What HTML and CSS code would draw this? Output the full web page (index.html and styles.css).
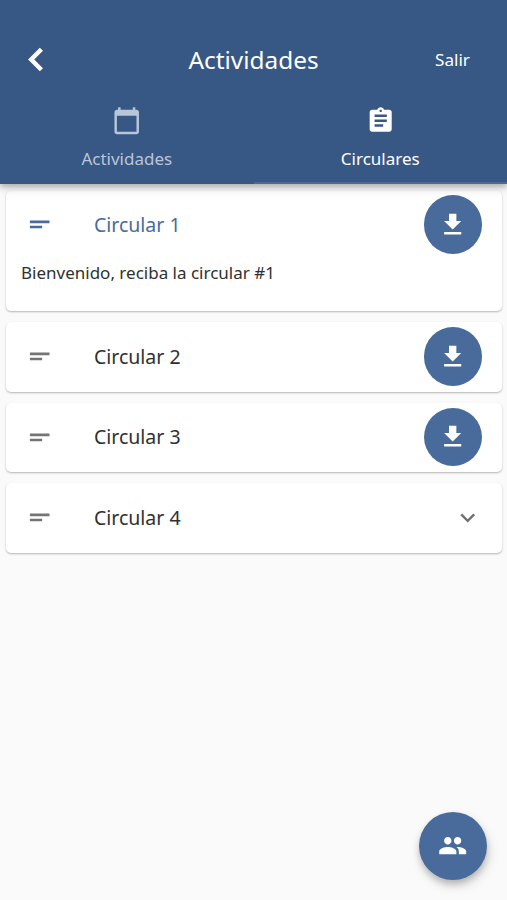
FILE: index.html
```html
<!DOCTYPE html>
<html lang="es">
<head>
<meta charset="utf-8">
<title>Actividades</title>
<link rel="stylesheet" href="styles.css">
</head>
<body>
<svg class="defs" width="0" height="0">
  <symbol id="short-text" viewBox="0 0 24 24"><path d="M4 8.600h16v2.200H4zM4 12.800h10v2.200H4z"/></symbol>
  <symbol id="download" viewBox="0 0 24 24"><path d="M19 9h-4V3H9v6H5l7 7 7-7zM5 18v2h14v-2H5z"/></symbol>
</svg>
<header class="header">
  <div class="bar">
    <button class="back" aria-label="Atrás"><svg viewBox="0 0 16 24"><path d="M13.4 1.8L3.2 12l10.2 10.2"/></svg></button>
    <h1 class="title">Actividades</h1>
    <button class="exit">Salir</button>
  </div>
  <nav class="tabs">
    <a class="tab">
      <svg class="icon" viewBox="0 0 24 24"><path d="M20 3h-1V1h-2v2H7V1H5v2H4c-1.1 0-2 .9-2 2v16c0 1.1.9 2 2 2h16c1.1 0 2-.9 2-2V5c0-1.1-.9-2-2-2zm0 18H4V8h16v13z"/></svg>
      <span>Actividades</span>
    </a>
    <a class="tab active">
      <svg class="icon" viewBox="0 0 24 24"><path d="M19 3h-4.18C14.4 1.84 13.3 1 12 1c-1.3 0-2.4.84-2.82 2H5c-1.1 0-2 .9-2 2v14c0 1.1.9 2 2 2h14c1.1 0 2-.9 2-2V5c0-1.1-.9-2-2-2zm-7 0c.55 0 1 .45 1 1s-.45 1-1 1-1-.45-1-1 .45-1 1-1zm2 14H7v-2h7v2zm3-4H7v-2h10v2zm0-4H7V7h10v2z"/></svg>
      <span>Circulares</span>
    </a>
  </nav>
</header>
<main class="list">
  <article class="card open">
    <div class="row">
      <svg class="icon lead"><use href="#short-text"/></svg>
      <span class="name">Circular 1</span>
      <button class="download" aria-label="Descargar"><svg class="icon"><use href="#download"/></svg></button>
    </div>
    <p class="body">Bienvenido, reciba la circular #1</p>
  </article>
  <article class="card">
    <div class="row">
      <svg class="icon lead"><use href="#short-text"/></svg>
      <span class="name">Circular 2</span>
      <button class="download" aria-label="Descargar"><svg class="icon"><use href="#download"/></svg></button>
    </div>
  </article>
  <article class="card">
    <div class="row">
      <svg class="icon lead"><use href="#short-text"/></svg>
      <span class="name">Circular 3</span>
      <button class="download" aria-label="Descargar"><svg class="icon"><use href="#download"/></svg></button>
    </div>
  </article>
  <article class="card">
    <div class="row">
      <svg class="icon lead"><use href="#short-text"/></svg>
      <span class="name">Circular 4</span>
      <svg class="icon chevron" viewBox="0 0 24 24"><path d="M16.59 8.59L12 13.17 7.41 8.59 6 10l6 6 6-6z"/></svg>
    </div>
  </article>
</main>
<button class="fab" aria-label="Grupo"><svg class="icon" viewBox="0 0 24 24"><path d="M16 11c1.66 0 2.99-1.34 2.99-3S17.66 5 16 5c-1.66 0-3 1.34-3 3s1.34 3 3 3zm-8 0c1.66 0 2.99-1.34 2.99-3S9.66 5 8 5C6.34 5 5 6.34 5 8s1.34 3 3 3zm0 2c-2.33 0-7 1.17-7 3.5V19h14v-2.500c0-2.330-4.670-3.500-7-3.500zm8 0c-.29 0-.62.02-.97.05 1.160.84 1.970 1.970 1.970 3.450V19h6v-2.500c0-2.330-4.670-3.500-7-3.500z"/></svg></button>
</body>
</html>
```
FILE: styles.css
```css
* { box-sizing: border-box; }
body {
  margin: 0;
  height: 900px;
  overflow: hidden;
  background: #fafafa;
  color: #303030;
  font-family: "Noto Sans", sans-serif;
}
button { border: 0; padding: 0; background: none; color: inherit; font: inherit; }
.defs { position: absolute; }
.icon { display: block; flex: none; width: 29.4px; height: 29.4px; fill: currentColor; }

.header {
  position: relative;
  z-index: 1;
  height: 184px;
  padding-top: 26px;
  background: #375784;
  color: #fff;
  box-shadow: 0 3px 5px rgba(0, 0, 0, .2), 0 5px 10px rgba(0, 0, 0, .12);
}
.bar {
  display: grid;
  grid-template-columns: 109px 1fr 109px;
  align-items: center;
  height: 67px;
}
.back { justify-self: start; margin-left: 28px; }
.back svg { display: block; width: 16px; height: 25px; fill: none; stroke: #fff; stroke-width: 4.4; }
.title { margin: 0; font-size: 24.4px; font-weight: 400; line-height: 35px; text-align: center; }
.exit { font-size: 17.1px; line-height: 23px; }
.tabs { display: grid; grid-template-columns: 1fr 1fr; height: 91px; }
.tab {
  display: flex;
  flex-direction: column;
  align-items: center;
  padding-top: 12.500px;
  font-size: 17px;
  line-height: 24px;
  color: #b8c6da;
  border-bottom: 2px solid transparent;
}
.tab span { margin-top: 12.500px; }
.tab.active { color: #fff; border-color: #486b9c; }

.list { display: flex; flex-direction: column; gap: 11px; padding: 7px 5px 0 6px; }
.card {
  height: 69.600px;
  background: #fff;
  border-radius: 5px;
  box-shadow: 0 1px 2px rgba(0, 0, 0, .28);
}
.card.open { height: 120px; }
.row { display: flex; align-items: center; height: 69.600px; padding: 0 20px 0 19px; }
.card.open .row { height: 67px; }
.lead { color: #757575; }
.name { flex: 1; margin-left: 39.500px; font-size: 19.5px; line-height: 28px; }
.open .lead, .open .name { color: #486b9c; }
.download {
  display: grid;
  place-items: center;
  width: 58.5px;
  height: 58.5px;
  margin-bottom: 1px;
  border-radius: 50%;
  background: #486b9c;
  color: #fff;
}
.open .download { margin-bottom: 0; }
.chevron { color: #707070; }
.body { margin: 3px 0 0 15px; font-size: 17px; line-height: 24px; }

.fab {
  position: absolute;
  right: 20px;
  bottom: 20px;
  display: grid;
  place-items: center;
  width: 68px;
  height: 68px;
  border-radius: 50%;
  background: #486b9c;
  color: #fff;
  box-shadow: 0 4px 6px rgba(0, 0, 0, .18), 2px 6px 12px rgba(0, 0, 0, .13);
}
```
